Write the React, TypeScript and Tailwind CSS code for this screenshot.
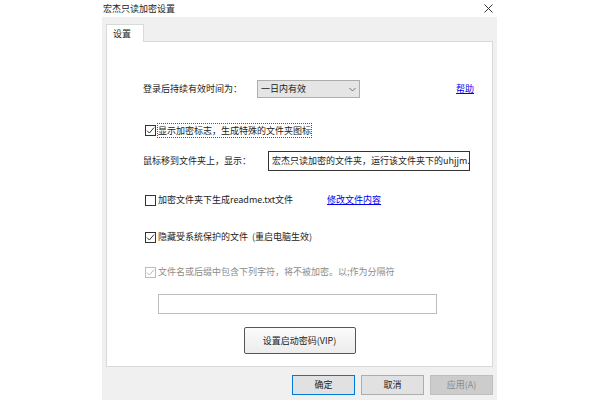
import React from 'react';

const font = { fontFamily: '"Noto Sans CJK SC", "Liberation Sans", sans-serif' };

const Check = ({ checked, disabled = false }: { checked: boolean; disabled?: boolean }) => (
  <span
    className={`w-[11px] h-[11px] border flex-shrink-0 flex items-center justify-center bg-white ${
      disabled ? 'border-[#bcbcbc]' : 'border-[#333333]'
    }`}
  >
    {checked && (
      <svg width="9" height="9" viewBox="0 0 9 9">
        <path d="M1 4.6 L3.4 7 L8 1.6" fill="none" stroke={disabled ? '#bcbcbc' : '#333333'} strokeWidth="1" />
      </svg>
    )}
  </span>
);

const Button = ({ label, primary = false, disabled = false }: { label: string; primary?: boolean; disabled?: boolean }) => (
  <div
    className={`w-[63px] h-[20px] flex items-center justify-center text-[9px] border ${
      disabled
        ? 'bg-[#cccccc] border-[#bfbfbf] text-[#8a8a8a]'
        : primary
        ? 'bg-[#e1e1e1] border-[#0078d7] text-[#222222]'
        : 'bg-[#e1e1e1] border-[#adadad] text-[#222222]'
    }`}
  >
    {label}
  </div>
);

export default function App() {
  return (
    <div className="w-[600px] h-[400px] bg-white overflow-hidden text-[#222222]" style={font}>
      <div className="ml-[102px] w-[395px] flex flex-col">
        {/* title bar */}
        <div className="h-[17px] flex items-center justify-between bg-white">
          <span className="text-[9px] pl-[1px] leading-none">宏杰只读加密设置</span>
          <svg width="9" height="9" viewBox="0 0 9 9" className="mr-[4px]">
            <path d="M0.5 0.5 L8.5 8.5 M8.5 0.5 L0.5 8.5" stroke="#333" strokeWidth="1" />
          </svg>
        </div>

        <div className="h-[383px] bg-[#f0f0f0] flex flex-col px-[4px] pt-[7px]">
          {/* tab */}
          <div className="w-[38px] h-[18px] bg-white border border-b-0 border-[#d9d9d9] flex items-center pl-[6px] text-[9px] relative z-10 -mb-[1px]">
            设置
          </div>

          {/* panel */}
          <div className="w-[387px] h-[326px] bg-white border border-[#d9d9d9] flex flex-col text-[9px]">
            <div className="mt-[38px] h-[18px] flex items-center pl-[36px]">
              <span className="w-[114px]">登录后持续有效时间为：</span>
              <div className="w-[103px] h-[18px] bg-[#e5e5e5] border border-[#adadad] flex items-center justify-between px-[3px]">
                <span>一日内有效</span>
                <svg width="7" height="5" viewBox="0 0 7 5">
                  <path d="M0.5 1 L3.5 4 L6.5 1" fill="none" stroke="#555" strokeWidth="0.8" />
                </svg>
              </div>
              <span className="ml-[96px] text-[#0000ee] underline">帮助</span>
            </div>

            <div className="mt-[25px] h-[15px] flex items-center pl-[38px] gap-[1px]">
              <Check checked />
              <span className="border border-dotted border-[#555555] h-[15px] flex items-center">显示加密标志，生成特殊的文件夹图标</span>
            </div>

            <div className="mt-[13px] h-[20px] flex items-center pl-[36px]">
              <span className="w-[125px]">鼠标移到文件夹上，显示：</span>
              <div className="w-[202px] h-[20px] border border-[#333333] flex items-center pl-[3px] overflow-hidden whitespace-nowrap">
                宏杰只读加密的文件夹，运行该文件夹下的uhjjm.exe
              </div>
            </div>

            <div className="mt-[22px] h-[14px] flex items-center pl-[38px] gap-[2px]">
              <Check checked={false} />
              <span className="w-[167px]">加密文件夹下生成readme.txt文件</span>
              <span className="text-[#0000ee] underline">修改文件内容</span>
            </div>

            <div className="mt-[23px] h-[14px] flex items-center pl-[38px] gap-[2px]">
              <Check checked />
              <span>隐藏受系统保护的文件&nbsp;&nbsp;(重启电脑生效)</span>
            </div>

            <div className="mt-[21px] h-[14px] flex items-center pl-[38px] gap-[2px] text-[#8c8c8c]">
              <Check checked disabled />
              <span>文件名或后缀中包含下列字符，将不被加密。以;作为分隔符</span>
            </div>

            <div className="mt-[15px] ml-[51px] w-[279px] h-[20px] border border-[#bcbcbc] bg-white" />

            <div className="mt-[13px] self-center w-[112px] h-[27px] border border-[#555555] rounded-[2px] bg-gradient-to-b from-[#fbfbfb] to-[#ececec] flex items-center justify-center">
              设置启动密码(VIP)
            </div>
          </div>

          {/* buttons */}
          <div className="mt-[8px] flex justify-end gap-[6px]">
            <Button label="确定" primary />
            <Button label="取消" />
            <Button label="应用(A)" disabled />
          </div>
        </div>
      </div>
    </div>
  );
}
